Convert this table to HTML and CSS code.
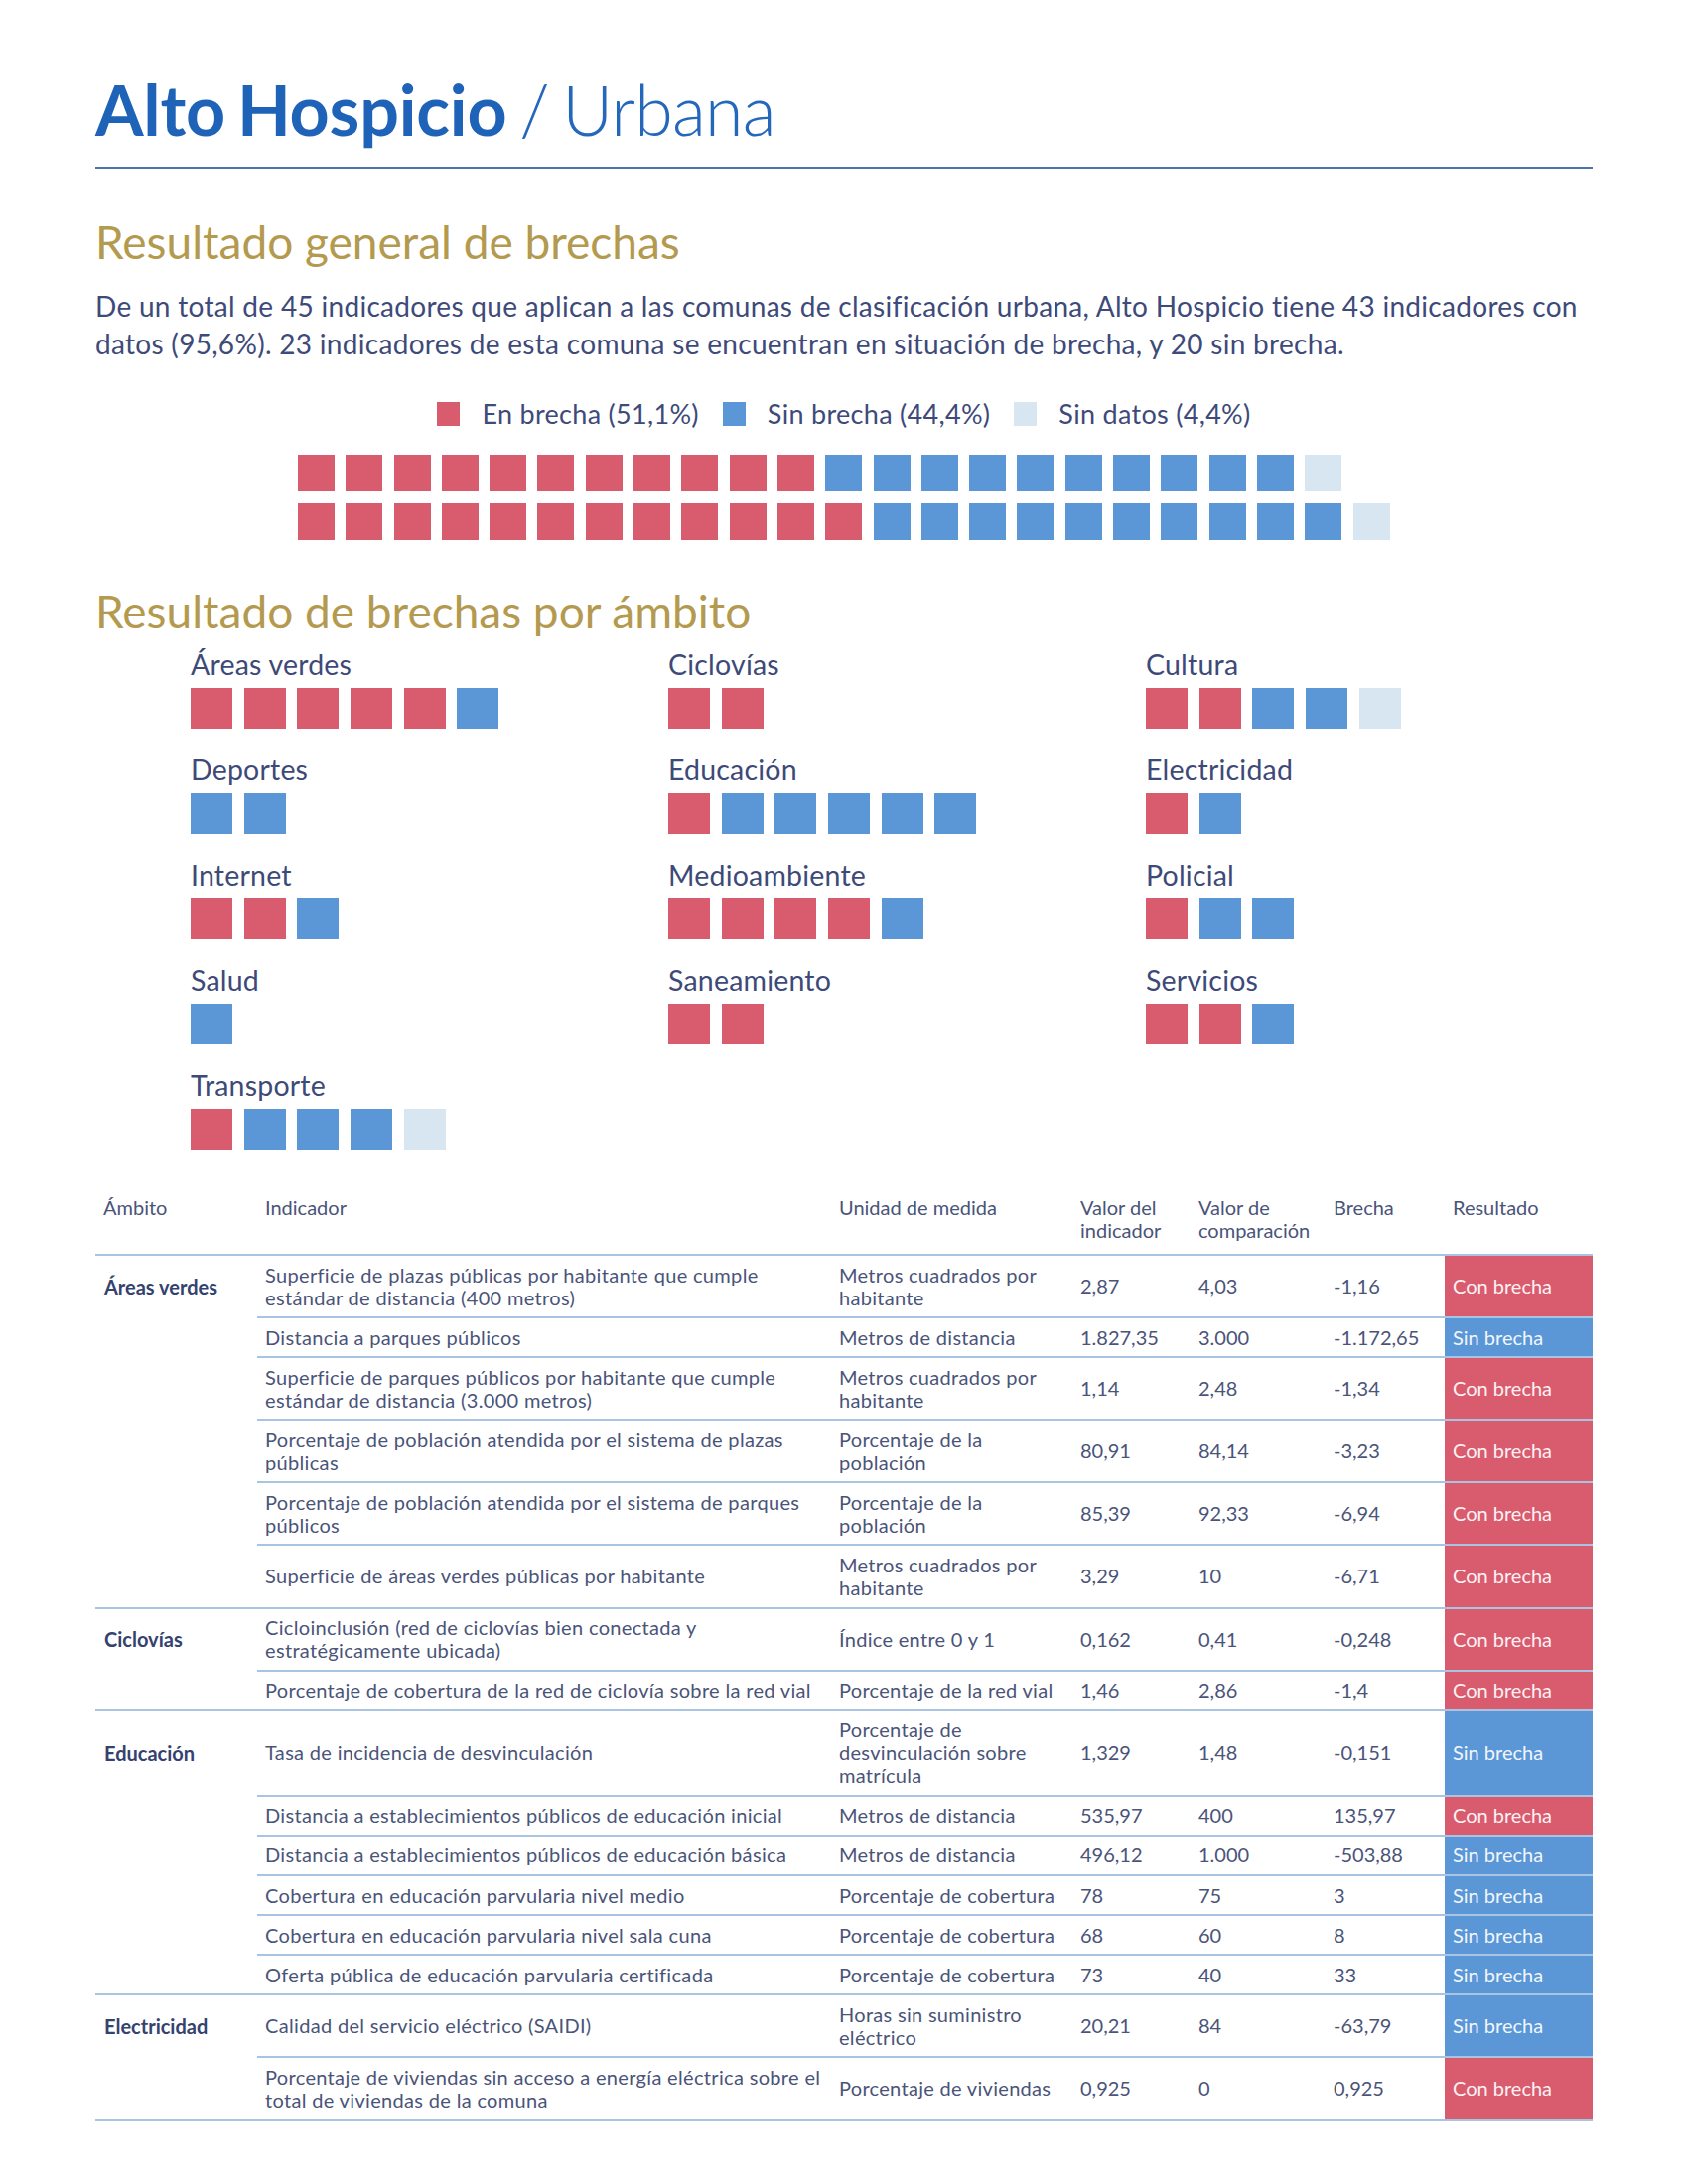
FILE: index.html
```html
<!DOCTYPE html>
<html lang="es">
<head>
<meta charset="utf-8">
<title>Alto Hospicio / Urbana</title>
<link rel="stylesheet" href="styles.css">
</head>
<body>
<main class="page">
  <h1 class="title"><strong>Alto Hospicio</strong> <span class="subtitle">/ Urbana</span></h1>

  <h2 class="section-title">Resultado general de brechas</h2>
  <p class="summary">De un total de 45 indicadores que aplican a las comunas de clasificación urbana, Alto Hospicio tiene 43 indicadores con datos (95,6%). 23 indicadores de esta comuna se encuentran en situación de brecha, y 20 sin brecha.</p>

  <div class="legend">
    <span class="legend-item"><span class="sq sq-legend red"></span>En brecha (51,1%)</span>
    <span class="legend-item"><span class="sq sq-legend blue"></span>Sin brecha (44,4%)</span>
    <span class="legend-item"><span class="sq sq-legend light"></span>Sin datos (4,4%)</span>
  </div>

  <div class="waffle">
    <div class="waffle-row">
      <span class="sq red"></span><span class="sq red"></span><span class="sq red"></span><span class="sq red"></span><span class="sq red"></span><span class="sq red"></span><span class="sq red"></span><span class="sq red"></span><span class="sq red"></span><span class="sq red"></span><span class="sq red"></span>
      <span class="sq blue"></span><span class="sq blue"></span><span class="sq blue"></span><span class="sq blue"></span><span class="sq blue"></span><span class="sq blue"></span><span class="sq blue"></span><span class="sq blue"></span><span class="sq blue"></span><span class="sq blue"></span>
      <span class="sq light"></span>
    </div>
    <div class="waffle-row">
      <span class="sq red"></span><span class="sq red"></span><span class="sq red"></span><span class="sq red"></span><span class="sq red"></span><span class="sq red"></span><span class="sq red"></span><span class="sq red"></span><span class="sq red"></span><span class="sq red"></span><span class="sq red"></span><span class="sq red"></span>
      <span class="sq blue"></span><span class="sq blue"></span><span class="sq blue"></span><span class="sq blue"></span><span class="sq blue"></span><span class="sq blue"></span><span class="sq blue"></span><span class="sq blue"></span><span class="sq blue"></span><span class="sq blue"></span>
      <span class="sq light"></span>
    </div>
  </div>

  <h2 class="section-title section-title-2">Resultado de brechas por ámbito</h2>
  <div class="ambitos">
    <div class="ambito"><div class="ambito-name">Áreas verdes</div><div class="ambito-squares"><span class="sq red"></span><span class="sq red"></span><span class="sq red"></span><span class="sq red"></span><span class="sq red"></span><span class="sq blue"></span></div></div>
    <div class="ambito"><div class="ambito-name">Ciclovías</div><div class="ambito-squares"><span class="sq red"></span><span class="sq red"></span></div></div>
    <div class="ambito"><div class="ambito-name">Cultura</div><div class="ambito-squares"><span class="sq red"></span><span class="sq red"></span><span class="sq blue"></span><span class="sq blue"></span><span class="sq light"></span></div></div>
    <div class="ambito"><div class="ambito-name">Deportes</div><div class="ambito-squares"><span class="sq blue"></span><span class="sq blue"></span></div></div>
    <div class="ambito"><div class="ambito-name">Educación</div><div class="ambito-squares"><span class="sq red"></span><span class="sq blue"></span><span class="sq blue"></span><span class="sq blue"></span><span class="sq blue"></span><span class="sq blue"></span></div></div>
    <div class="ambito"><div class="ambito-name">Electricidad</div><div class="ambito-squares"><span class="sq red"></span><span class="sq blue"></span></div></div>
    <div class="ambito"><div class="ambito-name">Internet</div><div class="ambito-squares"><span class="sq red"></span><span class="sq red"></span><span class="sq blue"></span></div></div>
    <div class="ambito"><div class="ambito-name">Medioambiente</div><div class="ambito-squares"><span class="sq red"></span><span class="sq red"></span><span class="sq red"></span><span class="sq red"></span><span class="sq blue"></span></div></div>
    <div class="ambito"><div class="ambito-name">Policial</div><div class="ambito-squares"><span class="sq red"></span><span class="sq blue"></span><span class="sq blue"></span></div></div>
    <div class="ambito"><div class="ambito-name">Salud</div><div class="ambito-squares"><span class="sq blue"></span></div></div>
    <div class="ambito"><div class="ambito-name">Saneamiento</div><div class="ambito-squares"><span class="sq red"></span><span class="sq red"></span></div></div>
    <div class="ambito"><div class="ambito-name">Servicios</div><div class="ambito-squares"><span class="sq red"></span><span class="sq red"></span><span class="sq blue"></span></div></div>
    <div class="ambito"><div class="ambito-name">Transporte</div><div class="ambito-squares"><span class="sq red"></span><span class="sq blue"></span><span class="sq blue"></span><span class="sq blue"></span><span class="sq light"></span></div></div>
  </div>

  <table class="data">
    <colgroup>
      <col class="c-amb"><col class="c-ind"><col class="c-uni"><col class="c-val"><col class="c-cmp"><col class="c-bre"><col class="c-res">
    </colgroup>
    <thead>
      <tr>
        <th>Ámbito</th><th>Indicador</th><th>Unidad de medida</th><th>Valor del indicador</th><th>Valor de comparación</th><th>Brecha</th><th>Resultado</th>
      </tr>
    </thead>
    <tbody>
      <tr class="group-start"><td class="amb">Áreas verdes</td><td class="ind">Superficie de plazas públicas por habitante que cumple estándar de distancia (400 metros)</td><td class="uni">Metros cuadrados por habitante</td><td>2,87</td><td>4,03</td><td>-1,16</td><td class="res con">Con brecha</td></tr>
      <tr><td class="amb"></td><td class="ind">Distancia a parques públicos</td><td class="uni">Metros de distancia</td><td>1.827,35</td><td>3.000</td><td>-1.172,65</td><td class="res sin">Sin brecha</td></tr>
      <tr><td class="amb"></td><td class="ind">Superficie de parques públicos por habitante que cumple estándar de distancia (3.000 metros)</td><td class="uni">Metros cuadrados por habitante</td><td>1,14</td><td>2,48</td><td>-1,34</td><td class="res con">Con brecha</td></tr>
      <tr><td class="amb"></td><td class="ind">Porcentaje de población atendida por el sistema de plazas públicas</td><td class="uni">Porcentaje de la población</td><td>80,91</td><td>84,14</td><td>-3,23</td><td class="res con">Con brecha</td></tr>
      <tr><td class="amb"></td><td class="ind">Porcentaje de población atendida por el sistema de parques públicos</td><td class="uni">Porcentaje de la población</td><td>85,39</td><td>92,33</td><td>-6,94</td><td class="res con">Con brecha</td></tr>
      <tr><td class="amb"></td><td class="ind">Superficie de áreas verdes públicas por habitante</td><td class="uni">Metros cuadrados por habitante</td><td>3,29</td><td>10</td><td>-6,71</td><td class="res con">Con brecha</td></tr>

      <tr class="group-start"><td class="amb">Ciclovías</td><td class="ind">Cicloinclusión (red de ciclovías bien conectada y estratégicamente ubicada)</td><td class="uni">Índice entre 0 y 1</td><td>0,162</td><td>0,41</td><td>-0,248</td><td class="res con">Con brecha</td></tr>
      <tr><td class="amb"></td><td class="ind">Porcentaje de cobertura de la red de ciclovía sobre la red vial</td><td class="uni">Porcentaje de la red vial</td><td>1,46</td><td>2,86</td><td>-1,4</td><td class="res con">Con brecha</td></tr>

      <tr class="group-start"><td class="amb">Educación</td><td class="ind">Tasa de incidencia de desvinculación</td><td class="uni">Porcentaje de desvinculación sobre matrícula</td><td>1,329</td><td>1,48</td><td>-0,151</td><td class="res sin">Sin brecha</td></tr>
      <tr><td class="amb"></td><td class="ind">Distancia a establecimientos públicos de educación inicial</td><td class="uni">Metros de distancia</td><td>535,97</td><td>400</td><td>135,97</td><td class="res con">Con brecha</td></tr>
      <tr><td class="amb"></td><td class="ind">Distancia a establecimientos públicos de educación básica</td><td class="uni">Metros de distancia</td><td>496,12</td><td>1.000</td><td>-503,88</td><td class="res sin">Sin brecha</td></tr>
      <tr><td class="amb"></td><td class="ind">Cobertura en educación parvularia nivel medio</td><td class="uni">Porcentaje de cobertura</td><td>78</td><td>75</td><td>3</td><td class="res sin">Sin brecha</td></tr>
      <tr><td class="amb"></td><td class="ind">Cobertura en educación parvularia nivel sala cuna</td><td class="uni">Porcentaje de cobertura</td><td>68</td><td>60</td><td>8</td><td class="res sin">Sin brecha</td></tr>
      <tr><td class="amb"></td><td class="ind">Oferta pública de educación parvularia certificada</td><td class="uni">Porcentaje de cobertura</td><td>73</td><td>40</td><td>33</td><td class="res sin">Sin brecha</td></tr>

      <tr class="group-start"><td class="amb">Electricidad</td><td class="ind">Calidad del servicio eléctrico (SAIDI)</td><td class="uni">Horas sin suministro eléctrico</td><td>20,21</td><td>84</td><td>-63,79</td><td class="res sin">Sin brecha</td></tr>
      <tr class="last"><td class="amb"></td><td class="ind">Porcentaje de viviendas sin acceso a energía eléctrica sobre el total de viviendas de la comuna</td><td class="uni">Porcentaje de viviendas</td><td>0,925</td><td>0</td><td>0,925</td><td class="res con">Con brecha</td></tr>
    </tbody>
  </table>
</main>
</body>
</html>
```

FILE: styles.css
```css
* { box-sizing: border-box; }

html, body {
  margin: 0;
  padding: 0;
  background: #ffffff;
}

body {
  font-family: Lato, "Open Sans", "Liberation Sans", sans-serif;
  color: #3d4a78;
}

.page {
  width: 1700px;
  padding: 68px 96px 40px;
}

.title {
  margin: 0;
  font-size: 70px;
  line-height: 84px;
  font-weight: 400;
  color: #2467bb;
  padding-bottom: 16px;
  border-bottom: 2px solid #4d74a6;
  word-spacing: -5px;
}

.title strong {
  font-weight: 700;
  color: #1f63b8;
  letter-spacing: -0.2px;
}

.title .subtitle {
  font-weight: 300;
  letter-spacing: -0.8px;
}

.section-title {
  margin: 46px 0 0;
  font-size: 46px;
  line-height: 55px;
  font-weight: 400;
  color: #b49a4e;
}

.section-title-2 {
  margin-top: 44px;
}

.summary {
  margin: 18px 0 0;
  font-size: 28px;
  line-height: 38px;
  letter-spacing: 0.3px;
  color: #3d4a7a;
}

.legend {
  margin-top: 37px;
  display: flex;
  justify-content: center;
  gap: 24px;
  font-size: 27px;
  line-height: 30px;
  letter-spacing: 0.3px;
  color: #3d4a7a;
}

.legend-item {
  display: flex;
  align-items: center;
  gap: 22px;
}

.sq {
  display: block;
  flex: none;
}

.red { background: #d95b6e; }
.blue { background: #5b97d6; }
.light { background: #d8e6f2; }

.sq-legend {
  width: 23px;
  height: 24px;
}

.waffle {
  width: 1100px;
  margin: 26px auto 0;
  display: flex;
  flex-direction: column;
  gap: 12px;
}

.waffle-row {
  display: flex;
  gap: 11.3px;
}

.waffle-row .sq {
  width: 37px;
  height: 37px;
}

.ambitos {
  margin-top: 9px;
  padding-left: 96px;
  display: grid;
  grid-template-columns: 481px 481px 481px;
  row-gap: 24px;
}

.ambito-name {
  font-size: 28.5px;
  line-height: 34px;
  letter-spacing: 0.2px;
  color: #3d4a78;
}

.ambito-squares {
  margin-top: 7px;
  display: flex;
  gap: 11.7px;
}

.ambito-squares .sq {
  width: 42px;
  height: 41px;
}

.data {
  margin-top: 39px;
  width: 1508px;
  border-collapse: collapse;
  table-layout: fixed;
  font-size: 20px;
  line-height: 23px;
  color: #4a5479;
}

.c-amb { width: 163px; }
.c-ind { width: 578px; }
.c-uni { width: 243px; }
.c-val { width: 119px; }
.c-cmp { width: 136px; }
.c-bre { width: 120px; }
.c-res { width: 149px; }

.data th {
  text-align: left;
  vertical-align: top;
  font-weight: 400;
  padding: 8px 8px 12px;
  color: #4a5479;
}

.data td {
  text-align: left;
  vertical-align: middle;
  padding: 7.5px 8px 7.6px;
  border-top: 2px solid #a9c4e3;
}

.data td.ind {
  padding-right: 2px;
  letter-spacing: 0.33px;
}

.data td.uni {
  letter-spacing: 0.3px;
}

.data td.amb {
  border-top: none;
  font-weight: 700;
  color: #34426f;
  padding-left: 9px;
}

.data tr.group-start td.amb {
  border-top: 2px solid #a9c4e3;
}

.data tr.last td {
  border-bottom: 2px solid #a9c4e3;
}

.data td.res {
  color: #fdf1f3;
}

.data td.con { background: #d95b6e; }
.data td.sin { background: #5b97d6; color: #f1f6fc; }
```
